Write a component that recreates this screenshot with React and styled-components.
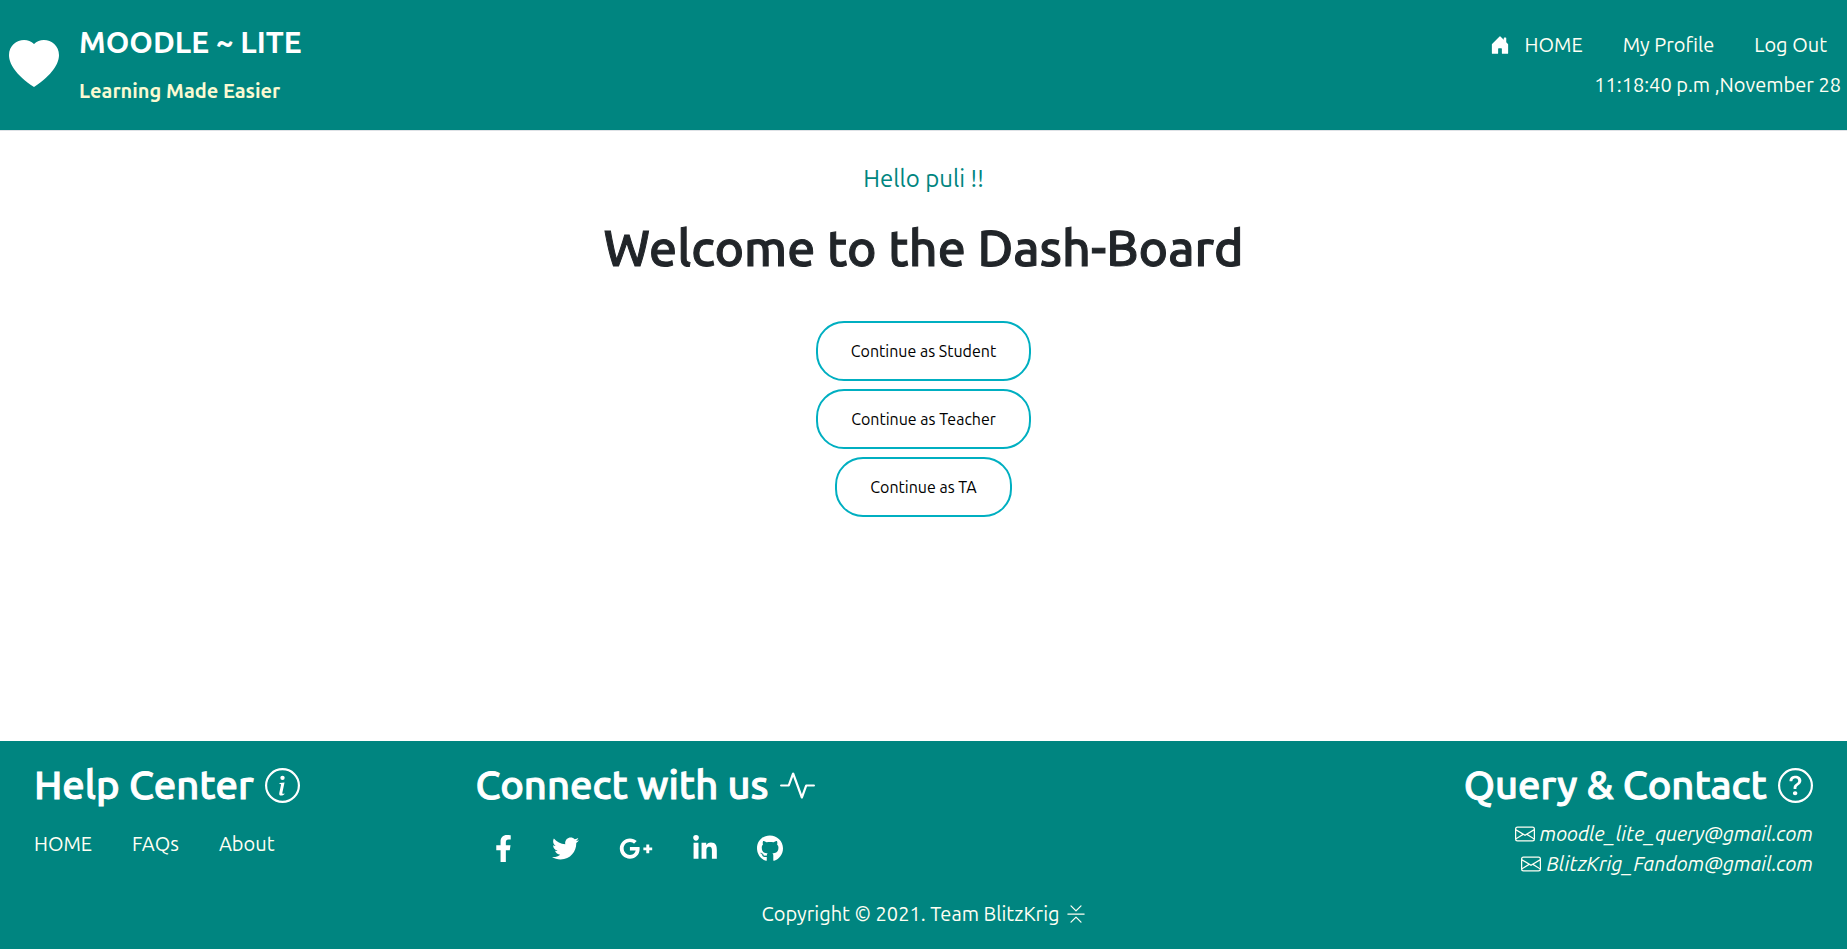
import React from 'react';
import styled, { createGlobalStyle, css } from 'styled-components';
import {
  BsActivity, BsChevronBarContract, BsEnvelope, BsHeartFill,
  BsHouseDoorFill, BsInfoCircle, BsQuestionCircle,
} from 'react-icons/bs';
import { FaFacebookF, FaTwitter, FaGooglePlusG, FaLinkedinIn, FaGithub } from 'react-icons/fa';

const GlobalStyle = createGlobalStyle`
  *, *::before, *::after { box-sizing: border-box; }
  body {
    margin: 0;
    background: #ffffff;
    color: #212529;
    font-family: Ubuntu, "Noto Sans", "Liberation Sans", sans-serif;
    font-size: 20px;
    line-height: 30px;
  }
  h1, h2, h3, p, ul { margin: 0; padding: 0; }
  ul { list-style: none; }
  svg { display: block; flex: none; }
`;

const Page = styled.div`
  min-height: 100vh;
  display: flex;
  flex-direction: column;
`;

const band = css`
  background: #008580;
  color: #fffff4;
`;

/* Ubuntu has no medium cut everywhere, so a thin outline thickens the regular one. */
const medium = css`
  font-weight: 500;
  -webkit-text-stroke: 1px currentColor;
`;

const Header = styled.header`
  ${band}
  display: flex;
  justify-content: space-between;
  padding: 24px 6px 24px 9px;
  border-bottom: 1px solid #dee2e6;
`;

const Brand = styled.div`
  display: flex;
  gap: 20px;
  > svg { margin-top: 16px; }
`;

const BrandText = styled.div`
  display: flex;
  flex-direction: column;
  gap: 16px;
`;

const SiteName = styled.h1`
  color: #ffffff;
  font-size: 30px;
  line-height: 36px;
  font-weight: 700;
`;

const Tagline = styled.p`
  color: #fafad2;
  font-weight: 700;
`;

const HeaderSide = styled.div`
  display: flex;
  flex-direction: column;
  align-items: flex-end;
  gap: 10px;
  padding-top: 6px;
`;

const Links = styled.ul`
  display: flex;
  gap: 40px;
  padding: ${(p) => p.$padding || '0'};
`;

const TextLink = styled.a`
  display: flex;
  align-items: center;
  gap: ${(p) => p.$gap || '15px'};
  color: inherit;
  text-decoration: none;
`;

const Main = styled.main`
  flex: 1;
  display: flex;
  flex-direction: column;
  align-items: center;
  padding: 33px 16px;
`;

const Greeting = styled.p`
  color: #008580;
  font-size: 24px;
`;

const Welcome = styled.h2`
  ${medium}
  margin-top: 23px;
  font-size: 50px;
  line-height: 60px;
`;

const Choices = styled.div`
  display: flex;
  flex-direction: column;
  align-items: center;
  gap: 8px;
  margin-top: 44px;
`;

const ChoiceButton = styled.button`
  height: 60px;
  padding: 0 33px;
  border: 2px solid #00afc1;
  border-radius: 28px;
  background: #ffffff;
  color: #000000;
  font-family: inherit;
  font-size: 16px;
  cursor: pointer;
`;

const Footer = styled.footer`
  ${band}
  padding: 20px 34px;
`;

const Columns = styled.div`
  display: grid;
  grid-template-columns: 33fr 34fr 66fr;
`;

const Column = styled.section`
  display: flex;
  flex-direction: column;
  align-items: ${(p) => (p.$end ? 'flex-end' : 'flex-start')};
  white-space: nowrap;
`;

const Heading = styled.h3`
  ${medium}
  display: flex;
  align-items: center;
  gap: 11px;
  margin-bottom: 10px;
  color: #ffffff;
  font-size: 40px;
  line-height: 48px;
`;

const Social = styled.ul`
  display: flex;
  align-items: center;
  gap: 40px;
  padding: 16px 20px 0;
`;

const SocialLink = styled.a`
  display: block;
  color: #ffffff;
  svg { width: ${(p) => p.$width}px; height: 27px; }
`;

const Mail = styled(TextLink)`
  font-style: italic;
`;

const Copyright = styled.p`
  display: flex;
  align-items: center;
  justify-content: center;
  gap: 6px;
  margin-top: 20px;
`;

const socials = [
  ['Facebook', FaFacebookF, 17],
  ['Twitter', FaTwitter, 27],
  ['Google Plus', FaGooglePlusG, 34],
  ['LinkedIn', FaLinkedinIn, 24],
  ['GitHub', FaGithub, 26],
];

export default function App() {
  return (
    <>
      <GlobalStyle />
      <Page>
        <Header>
          <Brand>
            <BsHeartFill size={50} color="#ffffff" />
            <BrandText>
              <SiteName>MOODLE ~ LITE</SiteName>
              <Tagline>Learning Made Easier</Tagline>
            </BrandText>
          </Brand>
          <HeaderSide>
            <nav>
              <Links $padding="0 14px 0 0">
                <li><TextLink href="#home"><BsHouseDoorFill size={20} color="#ffffff" />HOME</TextLink></li>
                <li><TextLink href="#profile">My Profile</TextLink></li>
                <li><TextLink href="#logout">Log Out</TextLink></li>
              </Links>
            </nav>
            <time>11:18:40 p.m ,November 28</time>
          </HeaderSide>
        </Header>
        <Main>
          <Greeting>Hello puli !!</Greeting>
          <Welcome>Welcome to the Dash-Board</Welcome>
          <Choices>
            {['Student', 'Teacher', 'TA'].map((role) => (
              <ChoiceButton key={role} type="button">Continue as {role}</ChoiceButton>
            ))}
          </Choices>
        </Main>
        <Footer>
          <Columns>
            <Column>
              <Heading>Help Center <BsInfoCircle size={35} /></Heading>
              <Links $padding="10px 0 0">
                <li><TextLink href="#home">HOME</TextLink></li>
                <li><TextLink href="#faqs">FAQs</TextLink></li>
                <li><TextLink href="#about">About</TextLink></li>
              </Links>
            </Column>
            <Column>
              <Heading>Connect with us <BsActivity size={35} /></Heading>
              <Social>
                {socials.map(([name, Icon, width]) => (
                  <li key={name}>
                    <SocialLink href={`#${name}`} aria-label={name} $width={width}><Icon /></SocialLink>
                  </li>
                ))}
              </Social>
            </Column>
            <Column $end>
              <Heading>Query &amp; Contact <BsQuestionCircle size={35} /></Heading>
              <Mail $gap="5px" href="mailto:moodle_lite_query@gmail.com"><BsEnvelope size={20} />moodle_lite_query@gmail.com</Mail>
              <Mail $gap="5px" href="mailto:BlitzKrig_Fandom@gmail.com"><BsEnvelope size={20} />BlitzKrig_Fandom@gmail.com</Mail>
            </Column>
          </Columns>
          <Copyright>Copyright © 2021. Team BlitzKrig <BsChevronBarContract size={20} /></Copyright>
        </Footer>
      </Page>
    </>
  );
}
